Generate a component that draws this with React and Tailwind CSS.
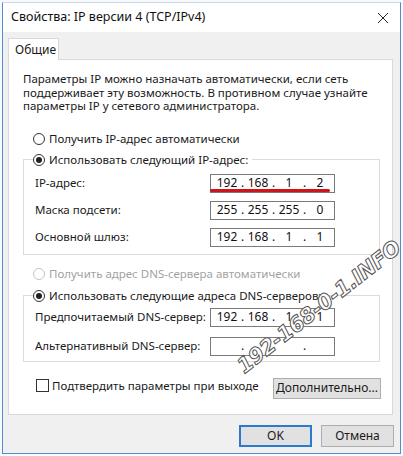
import { useState } from 'react';

const font = "font-['Segoe_UI','Noto_Sans',sans-serif]";

function Radio({ checked, disabled }) {
  return (
    <span
      className={`w-[12px] h-[12px] rounded-full border bg-white flex items-center justify-center shrink-0 ${
        disabled ? 'border-[#c4c4c4]' : 'border-[#333]'
      }`}
    >
      {checked && <span className="w-[6px] h-[6px] rounded-full bg-[#222]" />}
    </span>
  );
}

function IpField({ value, underline }) {
  const parts = value ? value.split('.') : ['', '', '', ''];
  return (
    <div className="relative w-[125px] h-[19px] border border-[#7a7a7a] bg-white flex items-center pl-[3px] text-[12px] text-[#111]">
      {parts.map((p, i) => (
        <div key={i} className="flex items-center">
          <span className="w-[26px] text-center">{p}</span>
          {i < 3 && <span className="w-[5px] text-center">.</span>}
        </div>
      ))}
      {underline && (
        <span className="absolute left-[-1px] bottom-[0px] w-[120px] h-[3px] rounded-full bg-[#d0141c]" />
      )}
    </div>
  );
}

function Row({ label, value, underline }) {
  return (
    <div className="flex items-center justify-between pr-[44px]">
      <span>{label}</span>
      <IpField value={value} underline={underline} />
    </div>
  );
}

export default function App() {
  const [confirm, setConfirm] = useState(false);

  return (
    <div className={`relative w-[403px] h-[456px] bg-[#f7f9fc] overflow-hidden ${font} text-[11.5px] text-[#1a1a1a]`}>
      {/* Window */}
      <div className="ml-[2px] mt-[2px] w-[399px] h-[452px] border border-[#4f8fcf] border-t-[#c9d9ea] flex flex-col bg-[#f0f0f0]">
        {/* Title bar */}
        <div className="h-[29px] bg-white flex items-center justify-between pl-[8px] pr-[10px]">
          <span className="text-[12.5px] text-[#111]">Свойства: IP версии 4 (TCP/IPv4)</span>
          <svg width="12" height="12" viewBox="0 0 12 12" className="mr-[1px]">
            <path d="M1 1 L11 11 M11 1 L1 11" stroke="#222" strokeWidth="1" />
          </svg>
        </div>

        {/* Body */}
        <div className="flex-1 flex flex-col pt-[6px] pl-[5px] pr-[7px]">
          {/* Tab */}
          <div className="relative z-10 w-[51px] h-[22px] -mb-[1px] bg-white border border-b-0 border-[#d9d9d9] flex items-center pl-[6px] text-[12px]">
            Общие
          </div>

          {/* Panel */}
          <div className="h-[356px] bg-white border border-[#d9d9d9] flex flex-col">
            <p className="mt-[12px] pl-[14px] leading-[13.5px]">
              Параметры IP можно назначать автоматически, если сеть
              <br />
              поддерживает эту возможность. В противном случае узнайте
              <br />
              параметры IP у сетевого администратора.
            </p>

            <div className="mt-[18px] pl-[24px] h-[16px] flex items-center gap-[4px]">
              <Radio />
              <span>Получить IP-адрес автоматически</span>
            </div>

            <fieldset className="mt-[5px] ml-[14px] mr-[12px] border border-[#dcdcdc] pl-[11px] pb-[7px]">
              <legend className="-ml-[2px] pr-[4px] h-[16px] flex items-center gap-[4px] bg-white">
                <Radio checked />
                <span>Использовать следующий IP-адрес:</span>
              </legend>
              <div className="mt-[6px] flex flex-col gap-[8px]">
                <Row label="IP-адрес:" value="192.168.1.2" underline />
                <Row label="Маска подсети:" value="255.255.255.0" />
                <Row label="Основной шлюз:" value="192.168.1.1" />
              </div>
            </fieldset>

            <div className="mt-[11px] pl-[24px] h-[16px] flex items-center gap-[4px] text-[#a2a2a2]">
              <Radio disabled />
              <span>Получить адрес DNS-сервера автоматически</span>
            </div>

            <fieldset className="mt-[6px] ml-[14px] mr-[12px] border border-[#dcdcdc] pl-[11px] pb-[5px]">
              <legend className="-ml-[2px] pr-[4px] h-[16px] flex items-center gap-[4px] bg-white">
                <Radio checked />
                <span>Использовать следующие адреса DNS-серверов:</span>
              </legend>
              <div className="mt-[4px] flex flex-col gap-[10px]">
                <Row label="Предпочитаемый DNS-сервер:" value="192.168.1.1" />
                <Row label="Альтернативный DNS-сервер:" />
              </div>
            </fieldset>

            <div className="mt-[15px] pl-[27px] pr-[11px] flex items-start justify-between">
              <label className="flex items-center gap-[3px] cursor-default" onClick={() => setConfirm(!confirm)}>
                <span className="w-[13px] h-[13px] border border-[#333] bg-white flex items-center justify-center">
                  {confirm && (
                    <svg width="9" height="9" viewBox="0 0 9 9">
                      <path d="M1 4.5 L3.5 7 L8 1.5" stroke="#222" strokeWidth="1.4" fill="none" />
                    </svg>
                  )}
                </span>
                <span>Подтвердить параметры при выходе</span>
              </label>
              <button className="mt-[1px] w-[108px] h-[21px] bg-[#e1e1e1] border border-[#adadad] text-[12px] flex items-center justify-center">
                Дополнительно...
              </button>
            </div>
          </div>

          {/* Dialog buttons */}
          <div className="mt-[10px] flex justify-end gap-[9px] -mr-[1px]">
            <button className="w-[73px] h-[22px] bg-[#e1e1e1] border-2 border-[#2a7bd0] text-[12px] flex items-center justify-center">
              OK
            </button>
            <button className="w-[73px] h-[22px] bg-[#e1e1e1] border border-[#adadad] text-[12px] flex items-center justify-center">
              Отмена
            </button>
          </div>
        </div>
      </div>

      {/* Watermark */}
      <div className="absolute left-[219px] top-[297px] w-[200px] text-center whitespace-nowrap rotate-[-38deg] font-['DejaVu_Sans',sans-serif] font-bold italic text-[21px] leading-none text-white tracking-[-0.5px] [-webkit-text-stroke:1px_#555] pointer-events-none select-none">
        192-168-0-1.INFO
      </div>
    </div>
  );
}
